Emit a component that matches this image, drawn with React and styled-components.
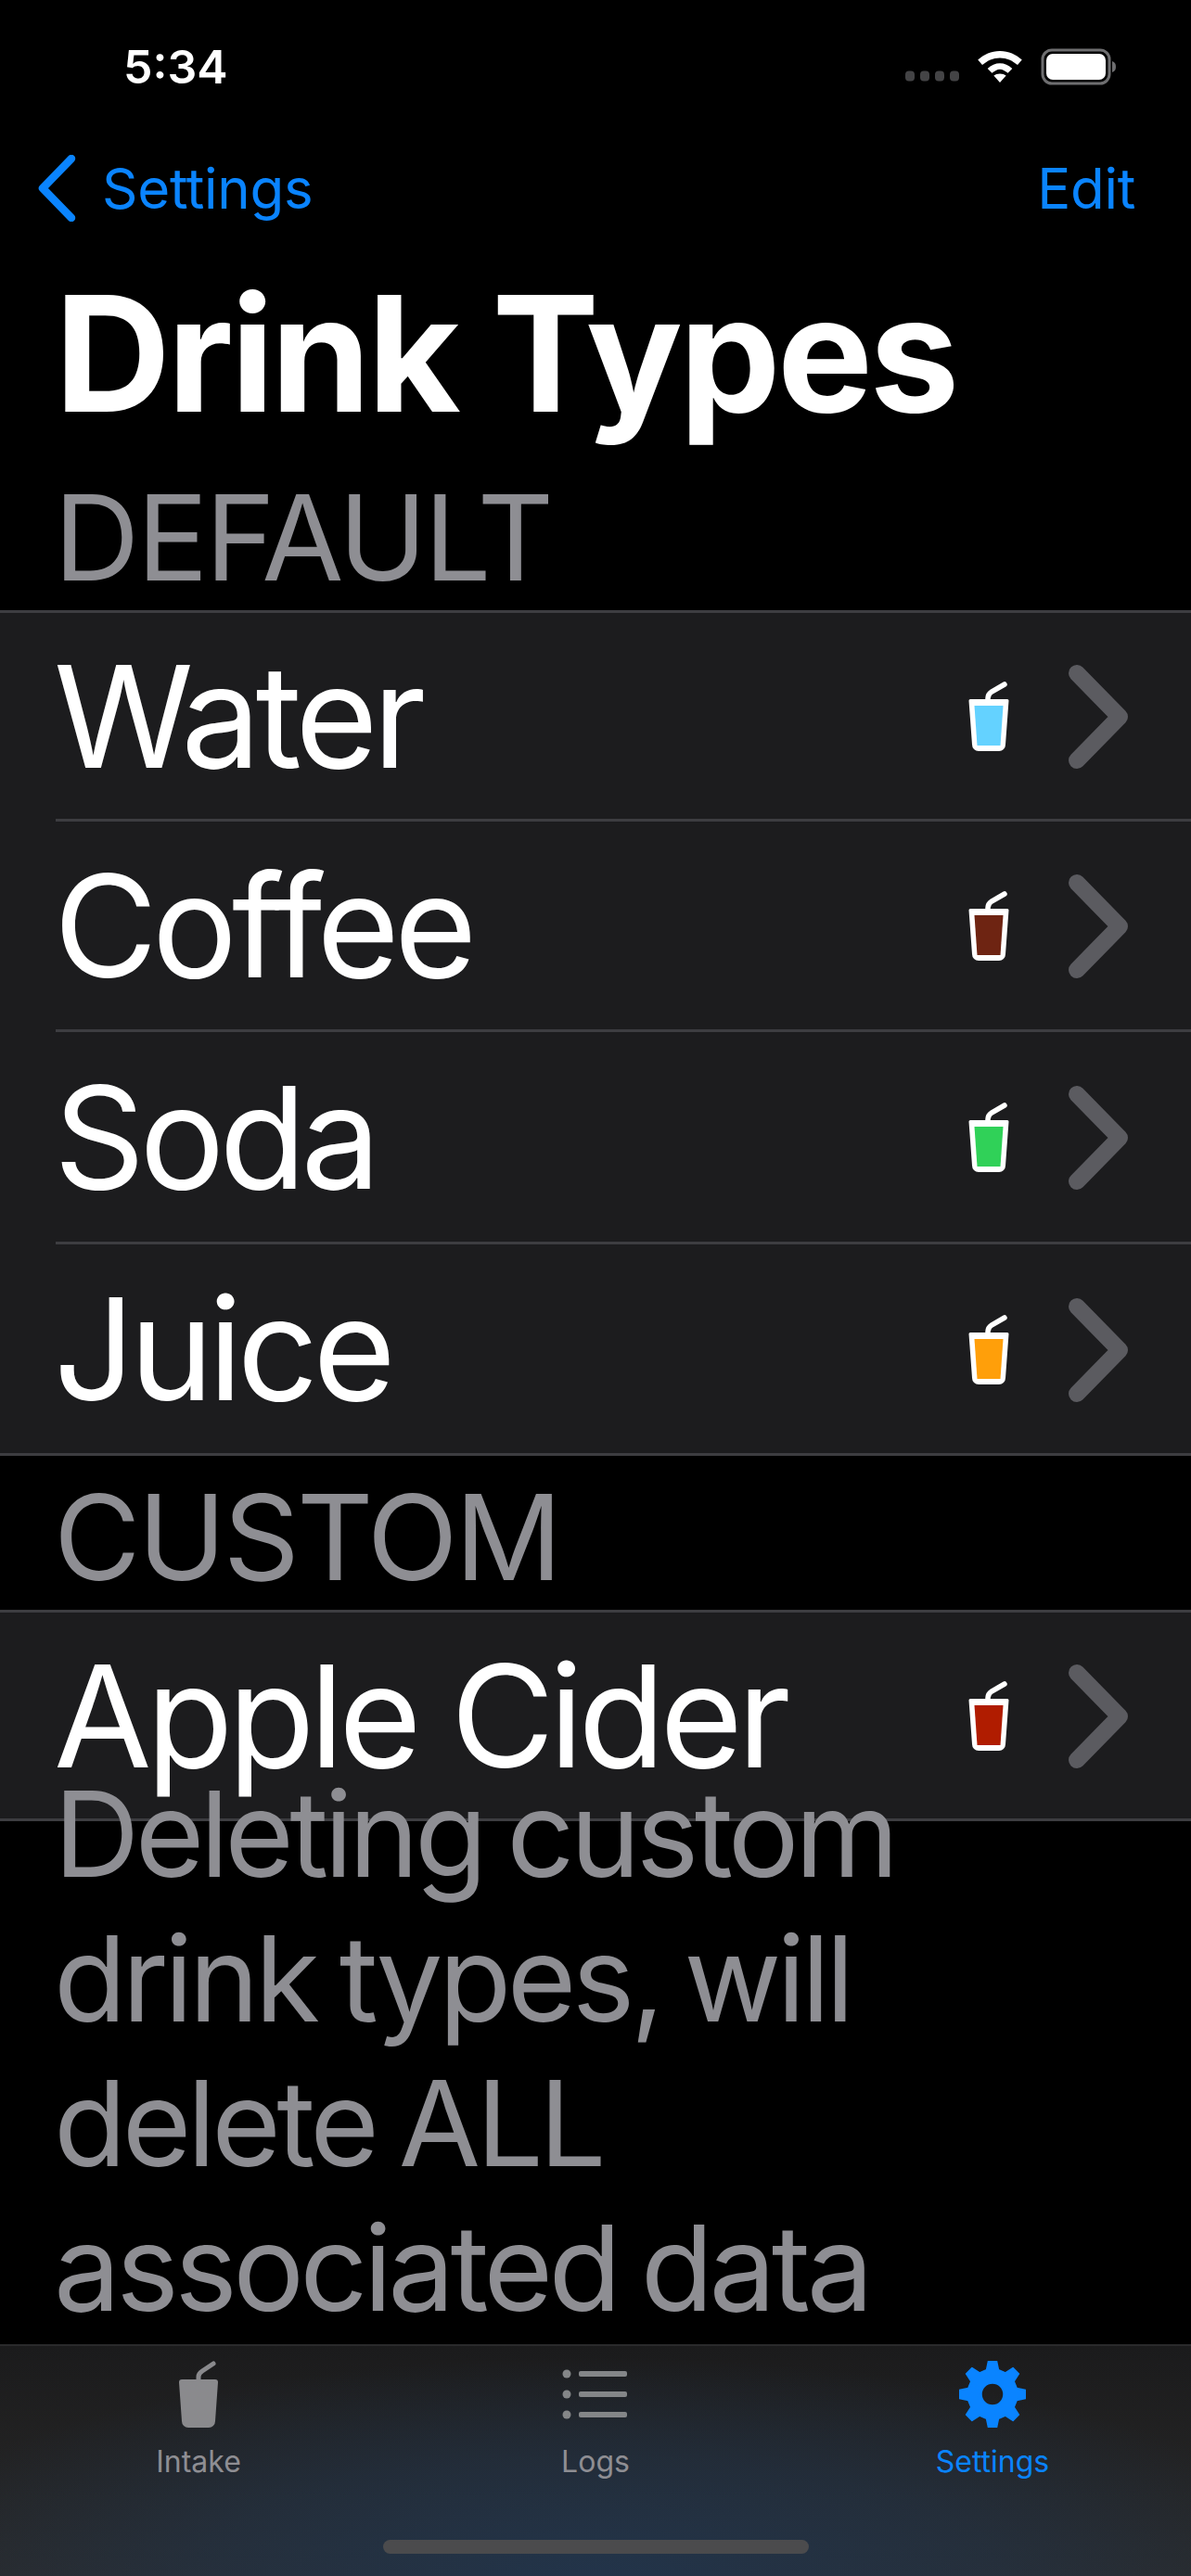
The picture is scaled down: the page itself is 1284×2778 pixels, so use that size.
import React from 'react';
import styled, { createGlobalStyle } from 'styled-components';

/* Global */
const GlobalStyle = createGlobalStyle`
  html, body {
    margin: 0;
    background: #000;
  }
`;

/* Styled Components */
const Screen = styled.div`
  width: 1284px;
  height: 2778px;
  display: flex;
  flex-direction: column;
  overflow: hidden;
  background: #000;
  color: #fff;
  font-family: Inter, "Liberation Sans", sans-serif;
`;
const StatusBar = styled.div`
  height: 144px;
  flex: none;
  display: flex;
  align-items: center;
  justify-content: space-between;
  padding: 0 80px 0 133px;
  box-sizing: border-box;
`;
const Clock = styled.span`
  font-size: 50px;
  font-weight: 600;
  letter-spacing: 0;
`;
const StatusIcons = styled.div`
  display: flex;
  align-items: center;
  gap: 19px;
`;
const NavBar = styled.div`
  height: 116px;
  flex: none;
  display: flex;
  align-items: center;
  justify-content: space-between;
  padding: 2px 60px 0 40px;
  box-sizing: border-box;
`;
const NavLink = styled.span`
  display: flex;
  align-items: center;
  gap: 28px;
  color: #0a84ff;
  font-size: 60px;
  letter-spacing: -0.3px;
`;
const Title = styled.h1`
  margin: 0;
  padding: 0 59px;
  font-size: 173px;
  line-height: 242px;
  font-weight: 700;
  letter-spacing: -3.5px;
`;
const SectionHeader = styled.div`
  padding: ${props => props.top}px 58px 0;
  color: #8e8e93;
  font-size: 128px;
  line-height: 156px;
  letter-spacing: -3px;
`;
const Group = styled.div`
  background: #1c1c1e;
  border-top: 3px solid #3d3d41;
  border-bottom: 3px solid #3d3d41;
`;
const Row = styled.div`
  height: ${props => props.height}px;
  display: flex;
  align-items: center;
  padding-left: 60px;
`;
const RowBody = styled.div`
  flex: 1;
  height: 100%;
  display: flex;
  align-items: center;
  justify-content: space-between;
  padding-right: 66px;
  box-sizing: border-box;
  border-bottom: ${props => (props.last ? 'none' : '3px solid #3d3d41')};
`;
const RowLabel = styled.span`
  margin-left: -2px;
  font-size: 153px;
  font-weight: 400;
  letter-spacing: -5.7px;
`;
const RowIcons = styled.div`
  display: flex;
  align-items: center;
  gap: 64px;
  padding-top: 2px;
`;
const Note = styled.div`
  margin-top: -64px;
  padding: 0 58px;
  color: #8e8e93;
  font-size: 128px;
  line-height: 156px;
  letter-spacing: -4.6px;
  word-spacing: -6px;
  width: 1000px;
  position: relative;
`;
const TabBar = styled.div`
  margin-top: auto;
  height: 250px;
  flex: none;
  position: relative;
  display: grid;
  grid-template-columns: repeat(3, 1fr);
  box-sizing: border-box;
  border-top: 2px solid #2a2a2c;
  background:
    radial-gradient(ellipse 62% 95% at 50% 100%, #22344a 0%, rgba(34, 52, 74, 0.55) 55%, rgba(34, 52, 74, 0) 100%),
    linear-gradient(#1b1b1c, #2a2a2a);
`;
const Tab = styled.div`
  display: flex;
  flex-direction: column;
  align-items: center;
  padding-top: 14px;
  color: ${props => (props.active ? '#0a84ff' : '#8e8e93')};
  font-size: 32px;
`;
const TabIcon = styled.div`
  height: 76px;
  display: flex;
  align-items: center;
  justify-content: center;
  margin-bottom: 15px;
`;
const HomeIndicator = styled.div`
  position: absolute;
  left: 413px;
  bottom: 24px;
  width: 459px;
  height: 15px;
  border-radius: 8px;
  background: #4b4b4d;
`;

/* Icons */
const WifiIcon = () => (
  <svg width="50" height="38" viewBox="0 0 52 40">
    <path d="M26 2C16 2 8 6 1 12l5 6c6-5 12-8 20-8s14 3 20 8l5-6C44 6 36 2 26 2z" fill="#fff" />
    <path d="M26 16c-5 0-10 2-14 6l5 5c3-2 6-4 9-4s6 2 9 4l5-5c-4-4-9-6-14-6z" fill="#fff" />
    <path d="M26 28c-3 0-5 1-7 2l7 8 7-8c-2-1-4-2-7-2z" fill="#fff" />
  </svg>
);

const BatteryIcon = () => (
  <svg width="82" height="40" viewBox="0 0 82 40">
    <rect x="2" y="2" width="72" height="36" rx="10" fill="none" stroke="#6e6e70" strokeWidth="3" />
    <rect x="6" y="6" width="64" height="28" rx="7" fill="#fff" />
    <path d="M77 14c3 1 4 3 4 6s-1 5-4 6z" fill="#6e6e70" />
  </svg>
);

const SignalDots = () => (
  <svg width="58" height="12" viewBox="0 0 58 12" style={{ marginTop: 20 }}>
    {[5, 21, 37, 53].map(x => <rect key={x} x={x - 5} y="0.5" width="10" height="11" rx="4" fill="#444446" />)}
  </svg>
);

const BackChevron = () => (
  <svg width="42" height="72" viewBox="0 0 42 72">
    <path d="M37 4L6 36l31 32" fill="none" stroke="#0a84ff" strokeWidth="8.5" strokeLinecap="round" strokeLinejoin="round" />
  </svg>
);

const RowChevron = () => (
  <svg width="66" height="112" viewBox="0 0 66 112">
    <path d="M9 9l46 47-46 47" fill="none" stroke="#5b5b60" strokeWidth="18" strokeLinecap="round" strokeLinejoin="round" />
  </svg>
);

const CupIcon = ({ color }) => (
  <svg width="44" height="76" viewBox="0 0 44 76">
    <path d="M21 21v-3c0-3 1-5 4-7L39 3" fill="none" stroke="#fff" strokeWidth="5.5" strokeLinecap="round" />
    <path d="M2 19h40a1.500 1.500 0 0 1 1.500 1.500L40 68a7 7 0 0 1-7 7H11a7 7 0 0 1-7-7L.5 20.500A1.500 1.500 0 0 1 2 19z" fill="#fff" />
    <path d="M6.500 26h31l-3 43h-25z" fill={color} />
  </svg>
);

const TabCupIcon = () => (
  <svg width="42" height="72" viewBox="0 0 42 72">
    <path d="M21 22v-5c0-3 1-4 4-6L37 3" fill="none" stroke="#8a8a8d" strokeWidth="5" strokeLinecap="round" />
    <path d="M3 20h36a3 3 0 0 1 3 3l-3 42a7 7 0 0 1-7 7H10a7 7 0 0 1-7-7L0 23a3 3 0 0 1 3-3z" fill="#8a8a8d" />
  </svg>
);

const TabListIcon = () => (
  <svg width="72" height="56" viewBox="0 0 72 56" fill="#848688">
    <circle cx="5" cy="6" r="4.500" />
    <circle cx="5" cy="28" r="4.500" />
    <circle cx="5" cy="50" r="4.500" />
    <rect x="18" y="3" width="52" height="6" rx="2" />
    <rect x="18" y="25" width="52" height="6" rx="2" />
    <rect x="18" y="47" width="52" height="6" rx="2" />
  </svg>
);

// eight toothed gear, points worked out instead of typed by hand
const gearPath = () => {
  const teeth = 8;
  const points = [];
  for (let i = 0; i < teeth; i++) {
    const a = (i / teeth) * Math.PI * 2 - Math.PI / 2;
    const step = Math.PI / teeth;
    [[-0.62, 27], [-0.32, 36], [0.32, 36], [0.62, 27]].forEach(([off, r]) => {
      const t = a + off * step;
      points.push(`${(36 + r * Math.cos(t)).toFixed(2)} ${(36 + r * Math.sin(t)).toFixed(2)}`);
    });
  }
  return `M${points.join('L')}Z M36 24a12 12 0 1 0 0 24a12 12 0 1 0 0-24Z`;
};

const TabGearIcon = () => (
  <svg width="72" height="72" viewBox="0 0 72 72">
    <path d={gearPath()} fill="#0a84ff" fillRule="evenodd" stroke="#0a84ff" strokeWidth="1.5" strokeLinejoin="round" />
  </svg>
);

/* Data */
const defaultDrinks = [
  { name: 'Water', color: '#64d2ff', height: 225 },
  { name: 'Coffee', color: '#6e2412', height: 227 },
  { name: 'Soda', color: '#30d158', height: 229 },
  { name: 'Juice', color: '#ff9f0a', height: 225 },
];

const DrinkRow = ({ name, color, height, last }) => (
  <Row height={height}>
    <RowBody last={last}>
      <RowLabel>{name}</RowLabel>
      <RowIcons>
        <CupIcon color={color} />
        <RowChevron />
      </RowIcons>
    </RowBody>
  </Row>
);

const App = () => (
  <Screen>
    <GlobalStyle />
    <StatusBar>
      <Clock>5:34</Clock>
      <StatusIcons>
        <SignalDots />
        <WifiIcon />
        <BatteryIcon />
      </StatusIcons>
    </StatusBar>
    <NavBar>
      <NavLink><BackChevron />Settings</NavLink>
      <NavLink>Edit</NavLink>
    </NavBar>
    <Title>Drink Types</Title>
    <SectionHeader top={0}>DEFAULT</SectionHeader>
    <Group>
      {defaultDrinks.map((drink, i) => (
        <DrinkRow key={drink.name} {...drink} last={i === defaultDrinks.length - 1} />
      ))}
    </Group>
    <SectionHeader top={10}>CUSTOM</SectionHeader>
    <Group>
      <DrinkRow name="Apple Cider" color="#b01c00" height={222} last />
    </Group>
    <Note>Deleting custom drink types, will delete ALL associated data</Note>
    <TabBar>
      <Tab>
        <TabIcon><TabCupIcon /></TabIcon>
        Intake
      </Tab>
      <Tab>
        <TabIcon><TabListIcon /></TabIcon>
        Logs
      </Tab>
      <Tab active>
        <TabIcon><TabGearIcon /></TabIcon>
        Settings
      </Tab>
      <HomeIndicator />
    </TabBar>
  </Screen>
);

export default App;
